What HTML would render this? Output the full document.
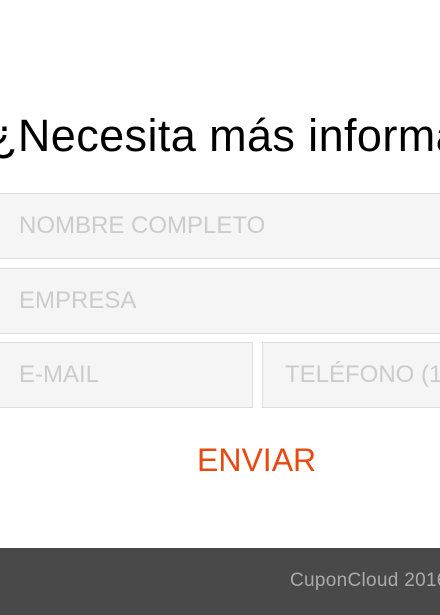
<!DOCTYPE html>
<html><head><meta charset="utf-8"><style>
*{margin:0;padding:0;box-sizing:border-box}
html,body{width:440px;height:615px;overflow:hidden}
body{background:#fff;font-family:"Liberation Sans",sans-serif;position:relative}
h1{position:absolute;left:-10px;top:110px;font-size:45px;font-weight:normal;color:#000;white-space:nowrap;line-height:52px;letter-spacing:0.4px;width:450px;overflow:hidden}
.in{position:absolute;background:#f5f5f5;border:1px solid #ddd;color:#ccc;font-size:24px;white-space:nowrap;line-height:63px;overflow:hidden}
.in span{position:absolute;top:0}
.btn{position:absolute;left:197px;top:440px;font-size:32px;color:#e8490f;line-height:40px}
.foot{position:absolute;left:0;top:548px;width:440px;height:67px;background:#494949;overflow:hidden}
.foot span{position:absolute;left:290px;top:22px;color:#aaa;font-size:19px;white-space:nowrap;letter-spacing:0.3px}
</style></head><body>
<h1>¿Necesita más información?</h1>
<div class="in" style="left:-10px;top:193px;width:451px;height:66px"><span style="left:28px">NOMBRE COMPLETO</span></div>
<div class="in" style="left:-10px;top:268px;width:451px;height:66px"><span style="left:28px">EMPRESA</span></div>
<div class="in" style="left:-10px;top:342px;width:263px;height:66px"><span style="left:28px">E-MAIL</span></div>
<div class="in" style="left:262px;top:342px;width:179px;height:66px"><span style="left:22px">TELÉFONO (1</span></div>
<div class="btn">ENVIAR</div>
<div class="foot"><span>CuponCloud 2016</span></div>
</body></html>
